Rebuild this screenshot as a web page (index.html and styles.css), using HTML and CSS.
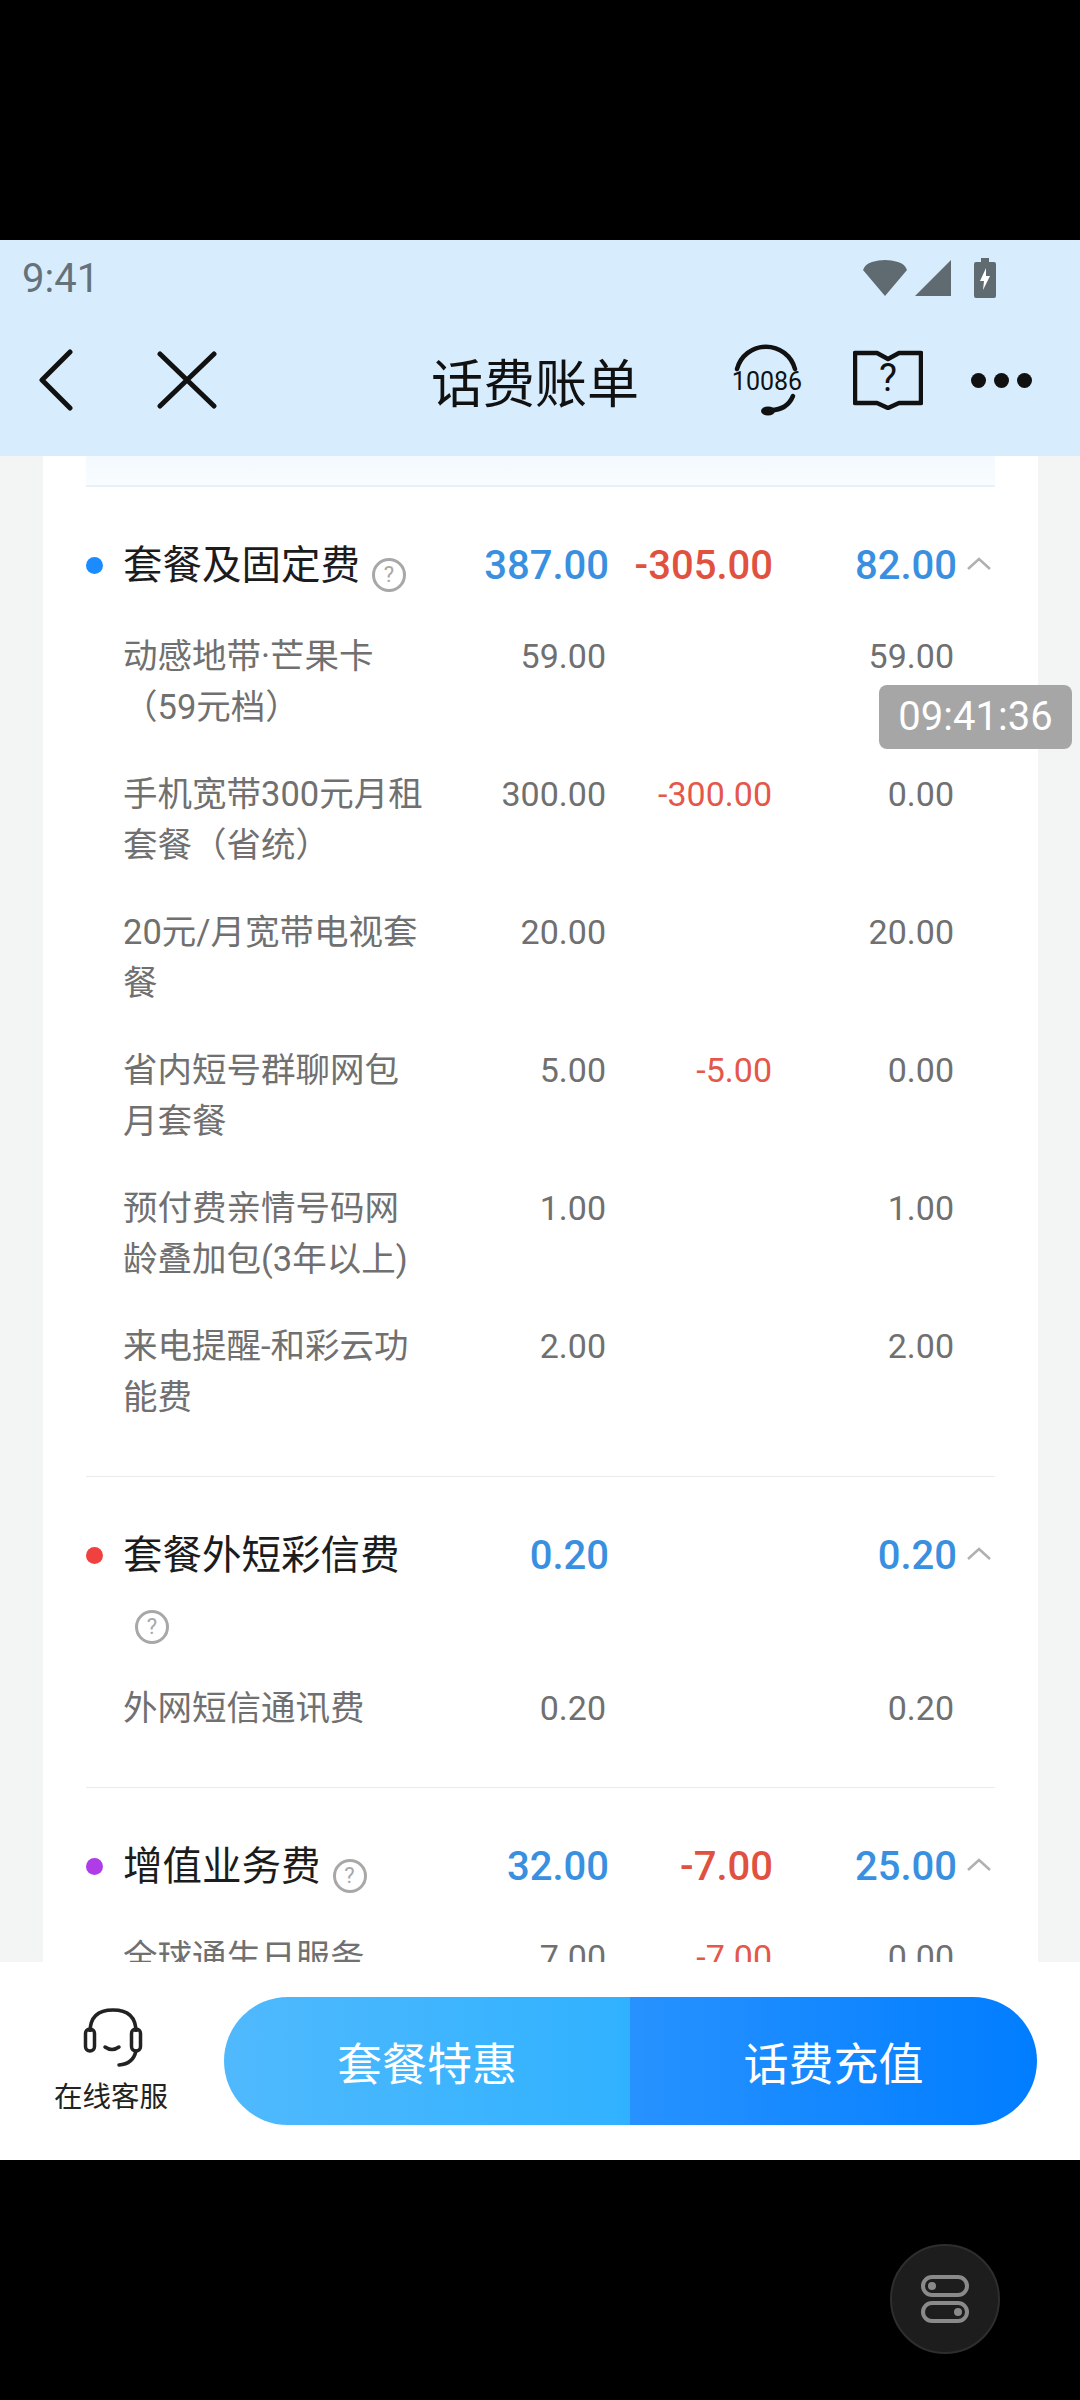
FILE: index.html
```html
<!DOCTYPE html>
<html>
<head>
<meta charset="UTF-8">
<title>话费账单</title>
<link rel="stylesheet" href="styles.css">
</head>
<body>
<div class="black-top"></div>

<header class="top">
	<div class="status">
		<span class="clock">9:41</span>
		<div class="status-icons">
			<svg width="46" height="38" viewBox="0 0 46 38"><path d="M23 37 L1 11 Q3 5 10 3 Q23 -1 36 3 Q43 5 45 11 Z" fill="#5f6b71"/></svg>
			<svg width="38" height="38" viewBox="0 0 38 38"><path d="M37 1 V37 H1 Z" fill="#5f6b71"/></svg>
			<svg width="22" height="40" viewBox="0 0 22 40"><path d="M7 0 H15 V4 H20 Q22 4 22 6 V38 Q22 40 20 40 H2 Q0 40 0 38 V6 Q0 4 2 4 H7 Z" fill="#5f6b71"/><path d="M12 10 L6 23 H10 L9 32 L16 18 H12 Z" fill="#fff"/></svg>
		</div>
	</div>
	<nav class="nav">
		<div class="nav-left">
			<svg width="36" height="62" viewBox="0 0 36 62"><path d="M32 3 L4 31 L32 59" fill="none" stroke="#111" stroke-width="5" stroke-linecap="round" stroke-linejoin="round"/></svg>
			<svg class="close" width="60" height="58" viewBox="0 0 60 58"><path d="M3 3 L57 55 M57 3 L3 55" fill="none" stroke="#111" stroke-width="5" stroke-linecap="round"/></svg>
		</div>
		<h1 class="title">话费账单</h1>
		<div class="nav-right">
			<svg width="72" height="72" viewBox="0 0 72 72">
				<path d="M6 25 A30 30 0 0 1 64 25" fill="none" stroke="#111" stroke-width="4.5" stroke-linecap="round"/>
				<path d="M62 52 Q56 66 40 66" fill="none" stroke="#111" stroke-width="4.5" stroke-linecap="round"/>
				<ellipse cx="37" cy="67" rx="7" ry="4.5" fill="#111"/>
				<text x="36" y="46" class="num-10086" text-anchor="middle">10086</text>
			</svg>
			<svg class="book" width="70" height="60" viewBox="0 0 70 60">
				<path d="M2 3 H24 L35 9 L46 3 H68 V53 H46 L35 58 L24 53 H2 Z" fill="none" stroke="#111" stroke-width="4.5" stroke-linejoin="round"/>
				<text x="35" y="41" class="book-mark" text-anchor="middle">?</text>
			</svg>
			<div class="dots"><i></i><i></i><i></i></div>
		</div>
	</nav>
</header>

<main class="content">
	<div class="card">
		<div class="strip"></div>

		<section class="group">
			<div class="head">
				<i class="dot dot-blue"></i>
				<div class="head-name">套餐及固定费<span class="tip">?</span></div>
				<div class="amt">387.00</div>
				<div class="amt minus">-305.00</div>
				<div class="amt">82.00</div>
				<svg class="up" width="26" height="14" viewBox="0 0 26 14"><path d="M2 12 L13 2 L24 12" fill="none" stroke="#b0b0b0" stroke-width="2.5"/></svg>
			</div>
			<div class="rows">
				<div class="row"><div class="name">动感地带·芒果卡（59元档）</div><div class="val">59.00</div><div class="val"></div><div class="val">59.00</div></div>
				<div class="row"><div class="name">手机宽带300元月租套餐（省统）</div><div class="val">300.00</div><div class="val minus">-300.00</div><div class="val">0.00</div></div>
				<div class="row"><div class="name">20元/月宽带电视套餐</div><div class="val">20.00</div><div class="val"></div><div class="val">20.00</div></div>
				<div class="row"><div class="name">省内短号群聊网包月套餐</div><div class="val">5.00</div><div class="val minus">-5.00</div><div class="val">0.00</div></div>
				<div class="row"><div class="name">预付费亲情号码网龄叠加包(3年以上)</div><div class="val">1.00</div><div class="val"></div><div class="val">1.00</div></div>
				<div class="row"><div class="name">来电提醒-和彩云功能费</div><div class="val">2.00</div><div class="val"></div><div class="val">2.00</div></div>
			</div>
		</section>

		<section class="group">
			<div class="head">
				<i class="dot dot-red"></i>
				<div class="head-name">套餐外短彩信费<span class="tip">?</span></div>
				<div class="amt">0.20</div>
				<div class="amt"></div>
				<div class="amt">0.20</div>
				<svg class="up" width="26" height="14" viewBox="0 0 26 14"><path d="M2 12 L13 2 L24 12" fill="none" stroke="#b0b0b0" stroke-width="2.5"/></svg>
			</div>
			<div class="rows">
				<div class="row"><div class="name">外网短信通讯费</div><div class="val">0.20</div><div class="val"></div><div class="val">0.20</div></div>
			</div>
		</section>

		<section class="group">
			<div class="head">
				<i class="dot dot-purple"></i>
				<div class="head-name">增值业务费<span class="tip">?</span></div>
				<div class="amt">32.00</div>
				<div class="amt minus">-7.00</div>
				<div class="amt">25.00</div>
				<svg class="up" width="26" height="14" viewBox="0 0 26 14"><path d="M2 12 L13 2 L24 12" fill="none" stroke="#b0b0b0" stroke-width="2.5"/></svg>
			</div>
			<div class="rows">
				<div class="row"><div class="name">全球通生日服务</div><div class="val">7.00</div><div class="val minus">-7.00</div><div class="val">0.00</div></div>
			</div>
		</section>
	</div>
	<div class="toast">09:41:36</div>
</main>

<footer class="bar">
	<div class="service">
		<svg width="60" height="60" viewBox="0 0 60 60">
			<path d="M7 24 Q7 2 30 2 Q53 2 53 24" fill="none" stroke="#222" stroke-width="3.5"/>
			<rect x="2.5" y="21" width="9" height="22" rx="4.5" fill="none" stroke="#222" stroke-width="3.5"/>
			<rect x="48.5" y="21" width="9" height="22" rx="4.5" fill="none" stroke="#222" stroke-width="3.5"/>
			<path d="M22 39 Q29 44 36 39" fill="none" stroke="#222" stroke-width="3.5" stroke-linecap="round"/>
			<path d="M53 43 Q50 56 36 57" fill="none" stroke="#222" stroke-width="3.5" stroke-linecap="round"/>
		</svg>
		<span>在线客服</span>
	</div>
	<div class="actions">
		<div class="btn btn-light">套餐特惠</div>
		<div class="btn btn-dark">话费充值</div>
	</div>
</footer>

<div class="black-bottom">
	<div class="float-btn">
		<svg width="48" height="48" viewBox="0 0 48 48">
			<rect x="2" y="2" width="44" height="18" rx="9" fill="none" stroke="#8a8a8a" stroke-width="4"/>
			<circle cx="11" cy="11" r="4" fill="#8a8a8a"/>
			<rect x="2" y="28" width="44" height="18" rx="9" fill="none" stroke="#8a8a8a" stroke-width="4"/>
			<circle cx="37" cy="37" r="4" fill="#8a8a8a"/>
		</svg>
	</div>
</div>
</body>
</html>
```

FILE: styles.css
```css
* {
	box-sizing: border-box;
}
body {
	margin: 0;
	width: 1080px;
	height: 2400px;
	overflow: hidden;
	background-color: #000;
	font-family: Roboto, "Noto Sans CJK SC", sans-serif;
}
.black-top {
	height: 240px;
}

/* header */
.top {
	height: 216px;
	background-color: #d7edfd;
}
.status {
	height: 76px;
	padding: 0 84px 0 22px;
	display: flex;
	justify-content: space-between;
	align-items: center;
}
.clock {
	font-size: 40px;
	color: #66727a;
}
.status-icons {
	display: flex;
	align-items: center;
	gap: 6px;
}
.status-icons svg:last-child {
	margin-left: 16px;
}
.nav {
	height: 128px;
	padding: 0 48px 0 38px;
	display: grid;
	grid-template-columns: 1fr auto 1fr;
	align-items: center;
}
.nav-left {
	display: flex;
	align-items: center;
}
.close {
	margin-left: 83px;
}
.title {
	margin: 0;
	font-size: 52px;
	font-weight: 400;
	color: #111;
}
.nav-right {
	display: flex;
	justify-content: flex-end;
	align-items: center;
}
.num-10086 {
	font-family: Roboto, sans-serif;
	font-size: 25px;
	fill: #111;
}
.book {
	margin-left: 50px;
}
.book-mark {
	font-family: Roboto, sans-serif;
	font-size: 38px;
	fill: #111;
}
.dots {
	margin-left: 48px;
	display: flex;
	gap: 8px;
}
.dots i {
	width: 15px;
	height: 15px;
	border-radius: 50%;
	background-color: #111;
}

/* bill list */
.content {
	position: relative;
	height: 1506px;
	overflow: hidden;
	background-color: #f3f5f5;
}
.card {
	width: 995px;
	margin-left: 43px;
	padding: 0 43px;
	background-color: #fff;
	min-height: 100%;
}
.strip {
	height: 31px;
	background: linear-gradient(#f3f9fe, #f9fcfe);
	border-bottom: 2px solid #e8f1f7;
}
.group {
	padding: 48px 0 53px;
	border-bottom: 1px solid #e9eced;
}
.head, .row {
	display: grid;
	grid-template-columns: 37px 310px 176px 164px 184px 38px;
	align-items: start;
}
.head {
	font-size: 40px;
	line-height: 62px;
}
.dot {
	width: 17px;
	height: 17px;
	margin-top: 22px;
	border-radius: 50%;
}
.dot-blue {
	background-color: #1a8cff;
}
.dot-red {
	background-color: #f04040;
}
.dot-purple {
	background-color: #b03ce8;
}
.head-name {
	color: #1c1c1c;
	font-size: 39.5px;
}
.tip {
	display: inline-flex;
	justify-content: center;
	align-items: center;
	width: 34px;
	height: 34px;
	margin-left: 12px;
	vertical-align: -3px;
	border: 3px solid #a8a8a8;
	border-radius: 50%;
	font-size: 22px;
	line-height: 1;
	color: #a8a8a8;
}
.amt {
	text-align: right;
	font-weight: 500;
	color: #3a90e0;
}
.amt.minus {
	color: #e0523f;
}
.up {
	margin: 22px 0 0 9px;
}
.rows {
	margin-top: 34px;
	display: flex;
	flex-direction: column;
	gap: 36px;
}
.row {
	font-size: 34px;
	line-height: 51px;
	color: #707070;
}
.name {
	grid-column: 2;
	font-size: 34.5px;
}
.val {
	padding-right: 3px;
	text-align: right;
}
.val.minus {
	padding-right: 1px;
	color: #e4574a;
}
.toast {
	position: absolute;
	left: 879px;
	top: 229px;
	width: 193px;
	height: 64px;
	border-radius: 8px;
	background-color: #a6a6a6;
	color: #fff;
	font-size: 40px;
	line-height: 64px;
	text-align: center;
}

/* bottom bar */
.bar {
	height: 198px;
	padding: 35px 43px 35px 54px;
	display: flex;
	align-items: center;
	background-color: #fff;
}
.service {
	width: 170px;
	display: flex;
	flex-direction: column;
	align-items: flex-start;
	font-size: 28.5px;
	color: #222;
}
.service svg {
	margin: 0 0 6px 29px;
}
.actions {
	width: 813px;
	height: 128px;
	display: flex;
	border-radius: 64px;
	overflow: hidden;
}
.btn {
	display: flex;
	justify-content: center;
	align-items: center;
	color: #fff;
	font-size: 45px;
}
.btn-light {
	width: 406px;
	background: linear-gradient(90deg, #50b9fd, #30b1ff);
}
.btn-dark {
	width: 407px;
	background: linear-gradient(90deg, #2792ff, #007dff);
}
.black-bottom {
	position: relative;
	height: 240px;
}
.float-btn {
	position: absolute;
	left: 890px;
	top: 84px;
	width: 110px;
	height: 110px;
	display: flex;
	justify-content: center;
	align-items: center;
	border: 2px solid #2e2e2e;
	border-radius: 50%;
	background-color: #1d1d1d;
}
```
